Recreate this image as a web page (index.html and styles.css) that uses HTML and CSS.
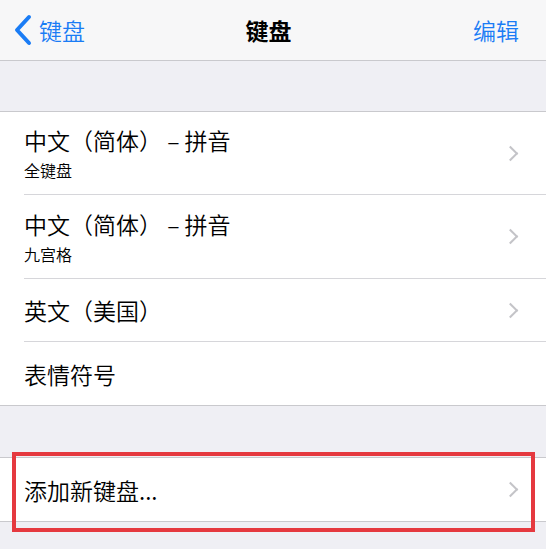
FILE: index.html
```html
<!DOCTYPE html>
<html lang="zh-CN">
<head>
    <meta charset="UTF-8">
    <meta name="viewport" content="width=device-width, initial-scale=1.0">
    <title>键盘</title>
    <link rel="stylesheet" href="styles.css">
</head>
<body>

    <header class="navbar">
        <a class="nav-back" href="#">
            <svg class="back-icon" width="18" height="32" viewBox="0 0 18 32">
                <path d="M15 3 L3 16 L15 29" fill="none" stroke="#1a7cf5" stroke-width="4" stroke-linecap="round" stroke-linejoin="round"/>
            </svg>
            <span>键盘</span>
        </a>
        <h1 class="nav-title">键盘</h1>
        <a class="nav-edit" href="#">编辑</a>
    </header>

    <div class="spacer spacer-top"></div>

    <ul class="group">
        <li class="row row-tall">
            <div class="row-text">
                <div class="row-title">中文（简体） – 拼音</div>
                <div class="row-sub">全键盘</div>
            </div>
            <span class="chevron"></span>
        </li>
        <li class="row row-tall">
            <div class="row-text">
                <div class="row-title">中文（简体） – 拼音</div>
                <div class="row-sub">九宫格</div>
            </div>
            <span class="chevron"></span>
        </li>
        <li class="row">
            <div class="row-text">
                <div class="row-title">英文（美国）</div>
            </div>
            <span class="chevron"></span>
        </li>
        <li class="row">
            <div class="row-text">
                <div class="row-title">表情符号</div>
            </div>
        </li>
    </ul>

    <div class="spacer"></div>

    <ul class="group">
        <li class="row">
            <div class="row-text">
                <div class="row-title">添加新键盘...</div>
            </div>
            <span class="chevron"></span>
            <span class="mark"></span>
        </li>
    </ul>

    <div class="spacer"></div>

</body>
</html>
```

FILE: styles.css
```css
*, *::before, *::after {
    box-sizing: border-box;
}

body {
    font-family: "Noto Sans CJK SC", "Noto Sans", sans-serif;
    background-color: #efeff4;
    margin: 0;
    padding: 0;
    color: #000;
}

.navbar {
    display: flex;
    align-items: center;
    justify-content: space-between;
    height: 61px;
    padding: 0 27px 0 14px;
    background-color: #f7f7f8;
    border-bottom: 1px solid #c9c9cd;
}

.nav-back,
.nav-edit {
    display: flex;
    align-items: center;
    color: #1a7cf5;
    text-decoration: none;
    font-size: 23px;
    font-weight: 350;
}

.nav-back {
    width: 120px;
}

.back-icon {
    margin-right: 7px;
}

.nav-edit {
    width: 120px;
    justify-content: flex-end;
}

.nav-title {
    margin: 0;
    font-size: 23px;
    font-weight: bold;
    padding-left: 4px;
}

.spacer {
    height: 51px;
}

.spacer-top {
    height: 50px;
}

.group {
    list-style: none;
    margin: 0;
    padding: 0;
    background-color: #fff;
    border-top: 1px solid #c9c9cd;
    border-bottom: 1px solid #c9c9cd;
}

.row {
    position: relative;
    display: flex;
    align-items: center;
    height: 63px;
    margin-left: 24px;
    padding-right: 24px;
    border-bottom: 1px solid #d6d6da;
}

.row:last-child {
    border-bottom: none;
}

.row-tall {
    height: 84px;
}

.row-tall:first-child {
    height: 83px;
}

.row-text {
    flex: 1;
}

.row-title {
    font-size: 23px;
    line-height: 30px;
    font-weight: 350;
}

.row-sub {
    font-size: 16px;
    line-height: 22px;
    margin-top: 4px;
    font-weight: 350;
}

.chevron {
    width: 11px;
    height: 11px;
    border-top: 2px solid #c4c4c8;
    border-right: 2px solid #c4c4c8;
    transform: rotate(45deg);
    margin-right: 6px;
}

/* annotation box round the add row */
.mark {
    position: absolute;
    left: -12px;
    top: -6px;
    width: 523px;
    height: 80px;
    border: 4px solid #e5393f;
}
```
